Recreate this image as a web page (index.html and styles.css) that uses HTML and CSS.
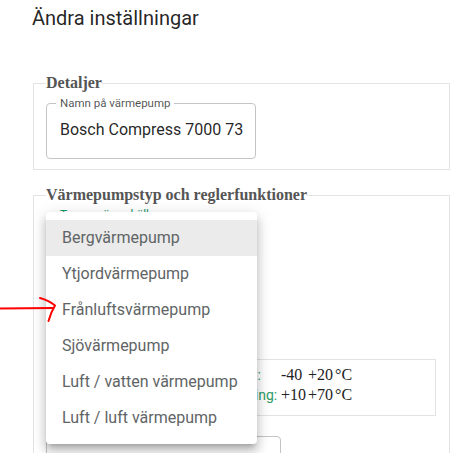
FILE: index.html
```html
<!DOCTYPE html>
<html lang="sv">
<head>
<meta charset="utf-8">
<title>Ändra inställningar</title>
<link rel="stylesheet" href="styles.css">
</head>
<body>
<div class="page">
  <h1 class="title">Ändra inställningar</h1>

  <fieldset class="group group-details">
    <legend class="group-legend">Detaljer</legend>
    <div class="field field-name">
      <fieldset class="outline" aria-hidden="true"><legend class="outline-label">Namn på värmepump</legend></fieldset>
      <div class="field-value">Bosch Compress 7000 73 AWE</div>
    </div>
  </fieldset>

  <fieldset class="group group-type">
    <legend class="group-legend">Värmepumpstyp och reglerfunktioner</legend>
    <div class="green-label">Typ av värmekälla</div>
    <div class="hidden-block"></div>
    <div class="range-box">
      <table class="range-table">
        <tr><td class="range-label">Arbetsområde ute, i drift:</td><td class="range-num">-40</td><td class="range-num">+20</td><td class="range-unit">°C</td></tr>
        <tr><td class="range-label">Arbetsområde framledning:</td><td class="range-num">+10</td><td class="range-num">+70</td><td class="range-unit">°C</td></tr>
      </table>
    </div>
    <div class="field field-bottom">
      <fieldset class="outline" aria-hidden="true"><legend class="outline-label"></legend></fieldset>
    </div>
  </fieldset>

  <ul class="menu">
    <li class="menu-item selected">Bergvärmepump</li>
    <li class="menu-item">Ytjordvärmepump</li>
    <li class="menu-item">Frånluftsvärmepump</li>
    <li class="menu-item">Sjövärmepump</li>
    <li class="menu-item">Luft / vatten värmepump</li>
    <li class="menu-item">Luft / luft värmepump</li>
  </ul>

  <svg class="arrow" width="60" height="30" viewBox="0 0 60 30" aria-hidden="true">
    <path d="M0 14.5 L53 14" fill="none" stroke="#f00" stroke-width="2" stroke-linecap="round"/>
    <path d="M40 4 Q49 6.5 55 11.5 Q51 18 48.5 27" fill="none" stroke="#f00" stroke-width="2" stroke-linecap="round" stroke-linejoin="round"/>
  </svg>
</div>
</body>
</html>
```

FILE: styles.css
```css
html, body {
  margin: 0;
  padding: 0;
  background: #fff;
  overflow: hidden;
}

.page {
  position: relative;
  width: 460px;
  height: 453px;
  overflow: hidden;
  padding: 0 10px 0 33px;
  box-sizing: border-box;
  font-family: Roboto, "Liberation Sans", sans-serif;
}

.title {
  margin: 6px 0 0 -1px;
  font-size: 20px;
  line-height: 24px;
  font-weight: 400;
  color: rgba(0, 0, 0, 0.87);
}

.group {
  margin: 0;
  padding: 0 12px 10px;
  border: 1px solid #e3e3e3;
  min-width: 0;
}

.group-details {
  margin-top: 44px;
}

.group-type {
  margin-top: 16px;
  height: 400px;
}

.group-legend {
  padding: 0;
  font-family: "Liberation Serif", serif;
  font-weight: 700;
  font-size: 16px;
  line-height: 18px;
  color: #555;
}

.field {
  position: relative;
  box-sizing: border-box;
}

.field-name {
  width: 210px;
  height: 56px;
  margin-top: 11px;
}

.outline {
  position: absolute;
  top: -6px;
  left: 0;
  right: 0;
  bottom: 0;
  margin: 0;
  padding: 0 9px;
  border: 1px solid #c4c4c4;
  border-radius: 4px;
  pointer-events: none;
  min-width: 0;
}

.outline-label {
  padding: 0 4px;
  font-size: 11.5px;
  line-height: 12px;
  color: rgba(0, 0, 0, 0.7);
}

.outline-label:empty {
  padding: 0;
}

.field-value {
  position: absolute;
  left: 14px;
  right: 10px;
  top: 17px;
  font-size: 16px;
  line-height: 20px;
  color: rgba(0, 0, 0, 0.87);
  white-space: nowrap;
  overflow: hidden;
}

.green-label {
  margin: 4px 0 0 14px;
  font-size: 12px;
  line-height: 14px;
  color: #1a9c6c;
}

.hidden-block {
  height: 137px;
}

.range-box {
  box-sizing: border-box;
  height: 57px;
  margin-right: 1px;
  border: 1px solid #e3e3e3;
  padding: 5px 0 0 58px;
}

.range-table {
  border-collapse: separate;
  border-spacing: 2px 0;
}

.range-table td {
  padding: 0;
  line-height: 20px;
  white-space: nowrap;
}

.range-label {
  width: 172px;
  font-size: 14px;
  color: #2e9a66;
  text-align: left;
}

.range-num, .range-unit {
  font-family: "Liberation Serif", serif;
  font-size: 16px;
  color: #222;
}

.field-bottom {
  width: 235px;
  height: 56px;
  margin-top: 20px;
}

.field-bottom .outline {
  top: 0;
}

.menu {
  position: absolute;
  left: 46px;
  top: 212px;
  width: 211px;
  margin: 0;
  padding: 8px 0;
  list-style: none;
  background: #fff;
  border-radius: 4px;
  box-shadow: 0 5px 5px -3px rgba(0, 0, 0, 0.2), 0 8px 10px 1px rgba(0, 0, 0, 0.14), 0 3px 14px 2px rgba(0, 0, 0, 0.12);
}

.menu-item {
  height: 36px;
  line-height: 36px;
  padding: 0 16px;
  font-size: 16px;
  color: #5f6566;
  white-space: nowrap;
}

.menu-item.selected {
  background: #ebebeb;
}

.arrow {
  position: absolute;
  left: 0;
  top: 294px;
}
```
